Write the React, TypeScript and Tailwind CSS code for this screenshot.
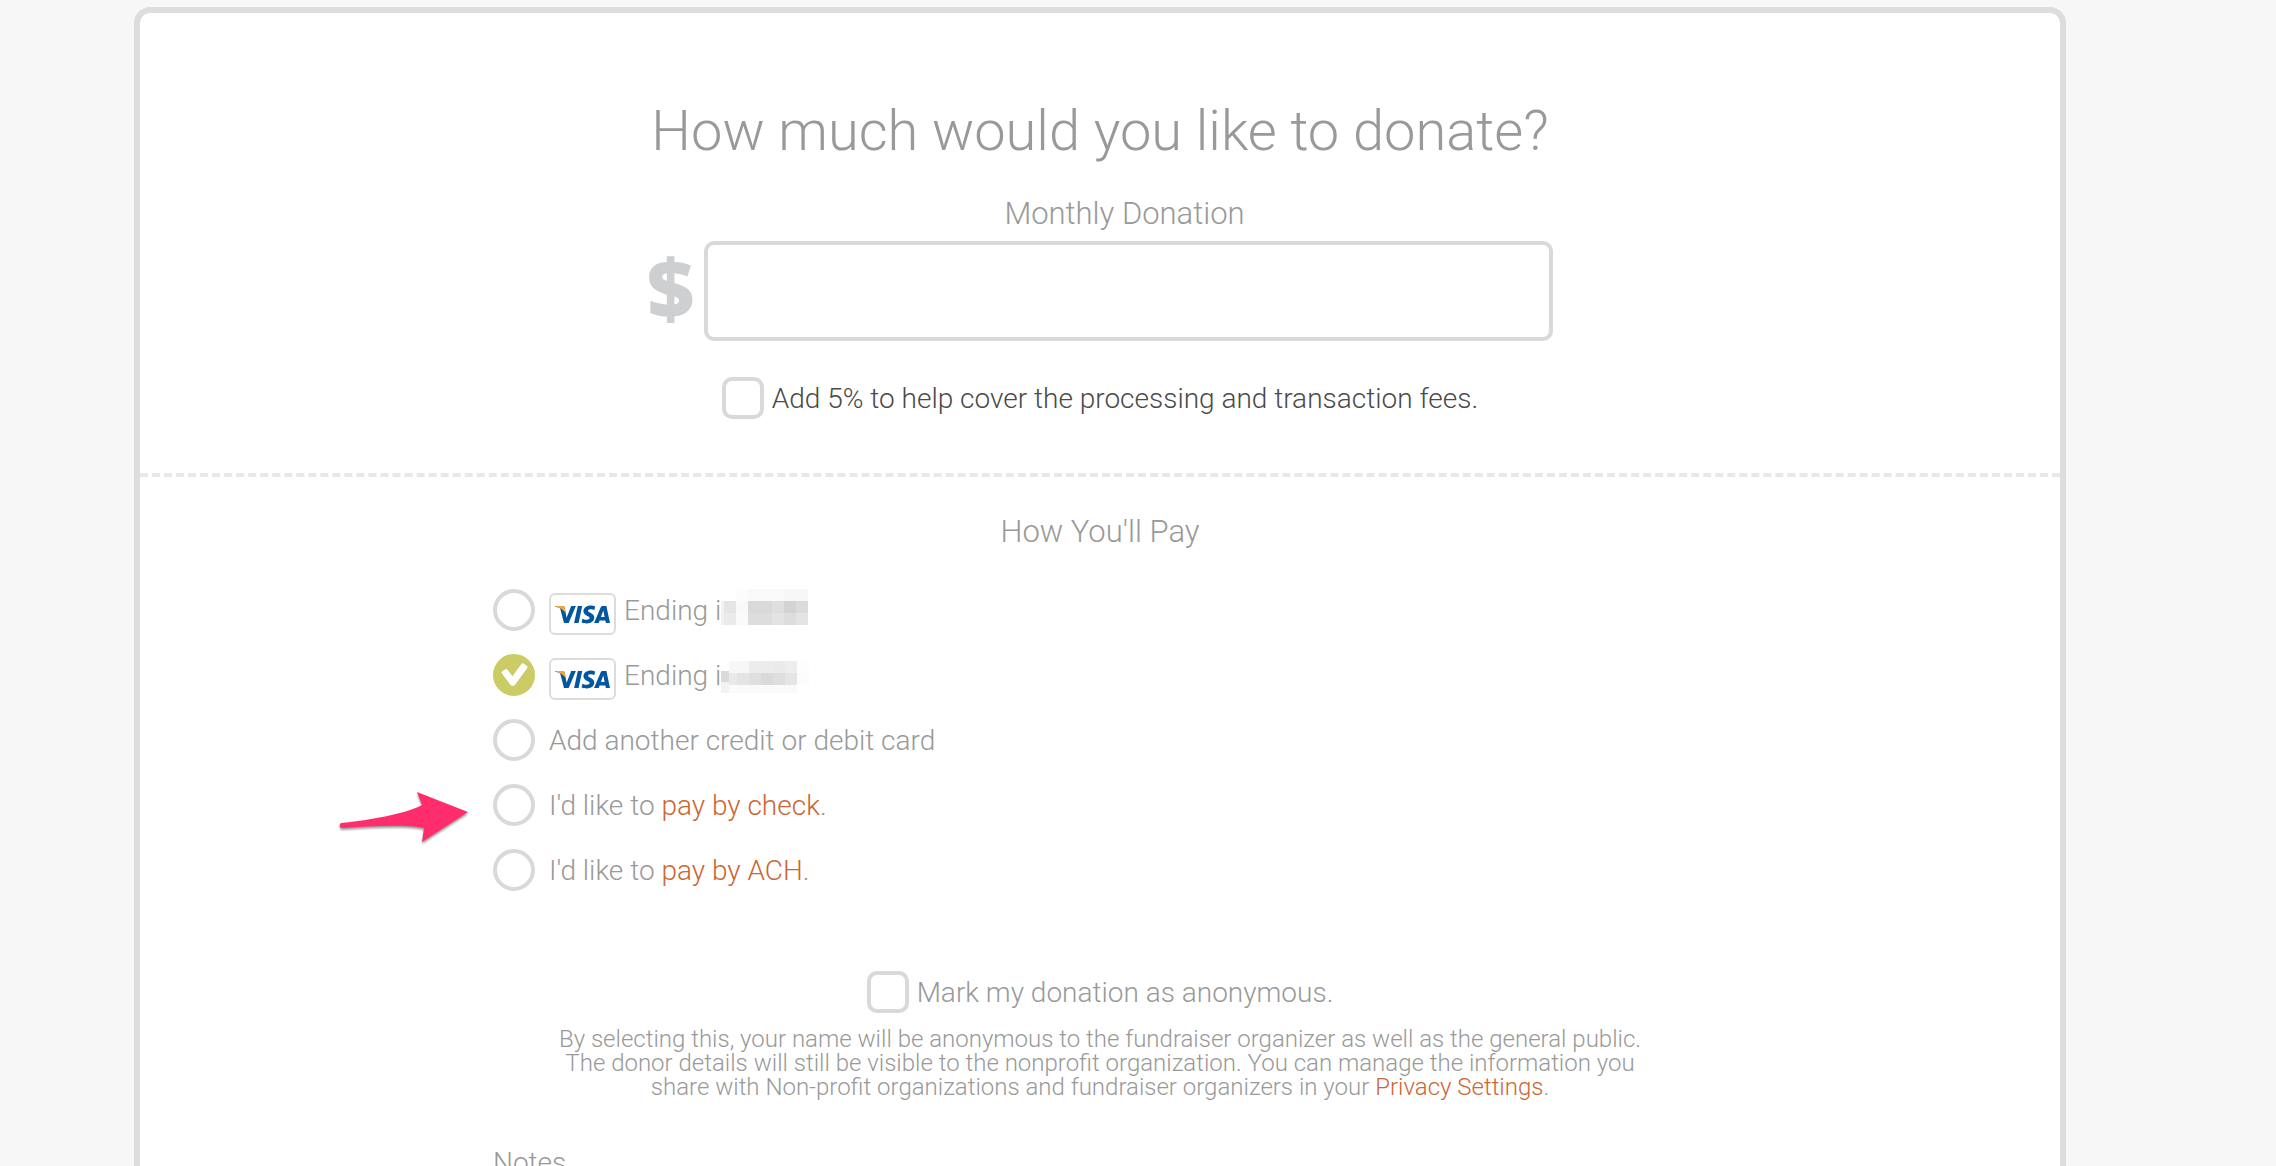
import { useState } from "react";
import type { ReactNode } from "react";
import { SiVisa } from "react-icons/si";

interface Block {
    x: number;
    y: number;
    w: number;
    h: number;
    fill: string;
}

interface PaymentOption {
    id: string;
    content: ReactNode;
    pointer?: boolean;
}

const firstMask: Block[] = [
    { x: 15, y: 0, w: 12, h: 12, fill: "#fcfcfc" },
    { x: 27, y: 0, w: 36, h: 12, fill: "#f9f9f9" },
    { x: 63, y: 0, w: 24, h: 12, fill: "#f7f7f7" },
    { x: 0, y: 12, w: 3, h: 12, fill: "#f2f2f2" },
    { x: 3, y: 12, w: 12, h: 12, fill: "#e5e5e5" },
    { x: 15, y: 12, w: 12, h: 12, fill: "#f9f9f9" },
    { x: 27, y: 12, w: 24, h: 12, fill: "#d9d9d9" },
    { x: 51, y: 12, w: 12, h: 12, fill: "#dedede" },
    { x: 63, y: 12, w: 12, h: 12, fill: "#d3d3d3" },
    { x: 75, y: 12, w: 12, h: 12, fill: "#dbdbdb" },
    { x: 0, y: 24, w: 3, h: 12, fill: "#f0f0f0" },
    { x: 3, y: 24, w: 12, h: 12, fill: "#eaeaea" },
    { x: 15, y: 24, w: 12, h: 12, fill: "#fafafa" },
    { x: 27, y: 24, w: 24, h: 12, fill: "#dddddd" },
    { x: 51, y: 24, w: 12, h: 12, fill: "#e3e3e3" },
    { x: 63, y: 24, w: 12, h: 12, fill: "#dddddd" },
    { x: 75, y: 24, w: 12, h: 12, fill: "#e4e4e4" },
];

const secondMask: Block[] = [
    { x: 8, y: 7, w: 20, h: 12, fill: "#f7f7f7" },
    { x: 28, y: 7, w: 24, h: 12, fill: "#ececec" },
    { x: 52, y: 7, w: 12, h: 12, fill: "#eaeaea" },
    { x: 64, y: 7, w: 12, h: 12, fill: "#ededed" },
    { x: 76, y: 7, w: 12, h: 12, fill: "#fdfdfd" },
    { x: 0, y: 17, w: 8, h: 11, fill: "#dadada" },
    { x: 0, y: 28, w: 8, h: 11, fill: "#f2f2f2" },
    { x: 8, y: 19, w: 8, h: 12, fill: "#e9e9e9" },
    { x: 16, y: 19, w: 12, h: 12, fill: "#e4e4e4" },
    { x: 28, y: 19, w: 12, h: 12, fill: "#dfdfdf" },
    { x: 40, y: 19, w: 12, h: 12, fill: "#dadada" },
    { x: 52, y: 19, w: 12, h: 12, fill: "#dedede" },
    { x: 64, y: 19, w: 12, h: 12, fill: "#e5e5e5" },
    { x: 76, y: 19, w: 12, h: 12, fill: "#fcfcfc" },
    { x: 8, y: 31, w: 68, h: 8, fill: "#fafafa" },
];

function MaskedDigits({ blocks }: { blocks: Block[] }) {
    return (
        <svg width="88" height="42" className="self-start" shapeRendering="crispEdges" aria-hidden="true">
            {blocks.map((b, i) => (
                <rect key={i} x={b.x} y={b.y} width={b.w} height={b.h} fill={b.fill} />
            ))}
        </svg>
    );
}

function VisaCard() {
    return (
        <span className="mt-2 mr-2 grid h-[42px] w-[67px] place-content-center overflow-hidden rounded-md border-2 border-[#dcdcdc] bg-white">
            <SiVisa size={55} className="col-start-1 row-start-1 text-[#00569f]" />
            <SiVisa
                size={55}
                className="col-start-1 row-start-1 text-[#f9a533] [clip-path:polygon(0_30%,18%_30%,22%_50%,12%_41%,0_36%)]"
            />
        </span>
    );
}

function PointerArrow() {
    return (
        <svg
            viewBox="0 0 130 56"
            className="absolute top-2 right-full mr-[24px] h-[56px] w-[130px] drop-shadow-[0_2px_1px_rgba(0,0,0,0.4)]"
            aria-hidden="true"
        >
            <path
                d="M2 31 Q0 32 1 35 L3 36 C32 34 66 32 85 36 L83 50 L129 20 L78 0 L83 13 C66 22 32 28 2 31 Z"
                fill="#ff2d6b"
            />
        </svg>
    );
}

function CheckBox({ id, label, className }: { id: string; label: string; className: string }) {
    return (
        <div className={`flex items-center justify-center gap-2 ${className}`}>
            <input
                id={id}
                type="checkbox"
                className="size-[42px] shrink-0 appearance-none rounded-[10px] border-4 border-[#d9d9d9] bg-white checked:bg-[#cccc66]"
            />
            <label htmlFor={id} className="pt-[2px]">
                {label}
            </label>
        </div>
    );
}

const linkClass = "text-[#cc6633] hover:underline";

const options: PaymentOption[] = [
    {
        id: "card-1",
        content: (
            <>
                <VisaCard />
                <span className="pt-[2px]">Ending i</span>
                <MaskedDigits blocks={firstMask} />
            </>
        ),
    },
    {
        id: "card-2",
        content: (
            <>
                <VisaCard />
                <span className="pt-[2px]">Ending i</span>
                <MaskedDigits blocks={secondMask} />
            </>
        ),
    },
    { id: "new-card", content: <span className="pt-[2px]">Add another credit or debit card</span> },
    {
        id: "check",
        pointer: true,
        content: (
            <span className="pt-[2px]">
                I'd like to <a href="#check" className={linkClass}>pay by check</a>.
            </span>
        ),
    },
    {
        id: "ach",
        content: (
            <span className="pt-[2px]">
                I'd like to <a href="#ach" className={linkClass}>pay by ACH</a>.
            </span>
        ),
    },
];

export default function App() {
    const [amount, setAmount] = useState("");
    const [method, setMethod] = useState("card-2");

    return (
        <div className="h-screen overflow-hidden bg-[#f7f7f7] pt-[7px] pr-[210px] pl-[134px] font-[Roboto,sans-serif] text-[28px] leading-8 font-light text-[#999]">
            <form className="min-h-full rounded-t-2xl border-6 border-[#ddd] bg-white pb-20">
                <section className="border-b-4 border-dashed border-[#e8e8e8] pt-[86px] pb-[54px]">
                    <h1 className="text-center text-[56px] leading-[64px]">How much would you like to donate?</h1>

                    <div className="mx-auto mt-[31px] grid max-w-[906px] grid-cols-[57px_1fr] gap-y-[7px]">
                        <label htmlFor="amount" className="col-start-2 pr-2 text-center text-[31px] leading-10">
                            Monthly Donation
                        </label>
                        <span className="font-[Open_Sans,sans-serif] text-[82px] leading-[90px] font-extrabold text-[#cdcfd1]">$</span>
                        <input
                            id="amount"
                            type="text"
                            value={amount}
                            onChange={(e) => setAmount(e.target.value)}
                            className="h-[100px] w-full rounded-[10px] border-4 border-[#d9d9d9] bg-white px-6 text-[56px] outline-none"
                        />
                    </div>

                    <CheckBox
                        id="fees"
                        label="Add 5% to help cover the processing and transaction fees."
                        className="mt-9 text-[#4a4a4a]"
                    />
                </section>

                <section className="mx-auto max-w-[1214px] pt-[35px]">
                    <h2 className="text-center text-[31px] leading-10">How You'll Pay</h2>

                    <ul className="mt-[37px] flex flex-col gap-[23px]">
                        {options.map((option) => (
                            <li key={option.id} className="relative flex h-[42px] items-center">
                                {option.pointer && <PointerArrow />}
                                <span className="grid shrink-0">
                                    <input
                                        id={option.id}
                                        type="radio"
                                        name="method"
                                        checked={method === option.id}
                                        onChange={() => setMethod(option.id)}
                                        className="col-start-1 row-start-1 size-[42px] appearance-none rounded-full border-4 border-[#d9d9d9] bg-white checked:border-[#cccc66] checked:bg-[#cccc66]"
                                    />
                                    {method === option.id && (
                                        <svg viewBox="0 0 42 42" className="pointer-events-none col-start-1 row-start-1 size-[42px]">
                                            <path
                                                d="M9.2 17.5 L12.4 15.2 Q13.4 14.6 14.2 15.5 L19.5 22.2 L28.6 9.8 Q29.4 8.8 30.5 9.5 L34 12 Q35 12.8 34.2 13.9 L22.3 30.4 Q19.8 33.4 17 30.3 L9 19.6 Q8.2 18.3 9.2 17.5 Z"
                                                fill="#fff"
                                            />
                                        </svg>
                                    )}
                                </span>
                                <label htmlFor={option.id} className="ml-[14px] flex h-[42px] items-center">
                                    {option.content}
                                </label>
                            </li>
                        ))}
                    </ul>

                    <CheckBox id="anonymous" label="Mark my donation as anonymous." className="mt-20" />

                    <p className="mx-auto mt-[14px] max-w-[1100px] text-center text-2xl leading-6">
                        By selecting this, your name will be anonymous to the fundraiser organizer as well as the general public.
                        The donor details will still be visible to the nonprofit organization. You can manage the information you
                        share with Non-profit organizations and fundraiser organizers in your{" "}
                        <a href="#privacy" className={linkClass}>Privacy Settings</a>.
                    </p>

                    <label htmlFor="notes" className="mt-12 block">Notes</label>
                    <textarea id="notes" rows={3} className="mt-3 w-full rounded-[10px] border-4 border-[#d9d9d9] p-4" />
                </section>
            </form>
        </div>
    );
}
